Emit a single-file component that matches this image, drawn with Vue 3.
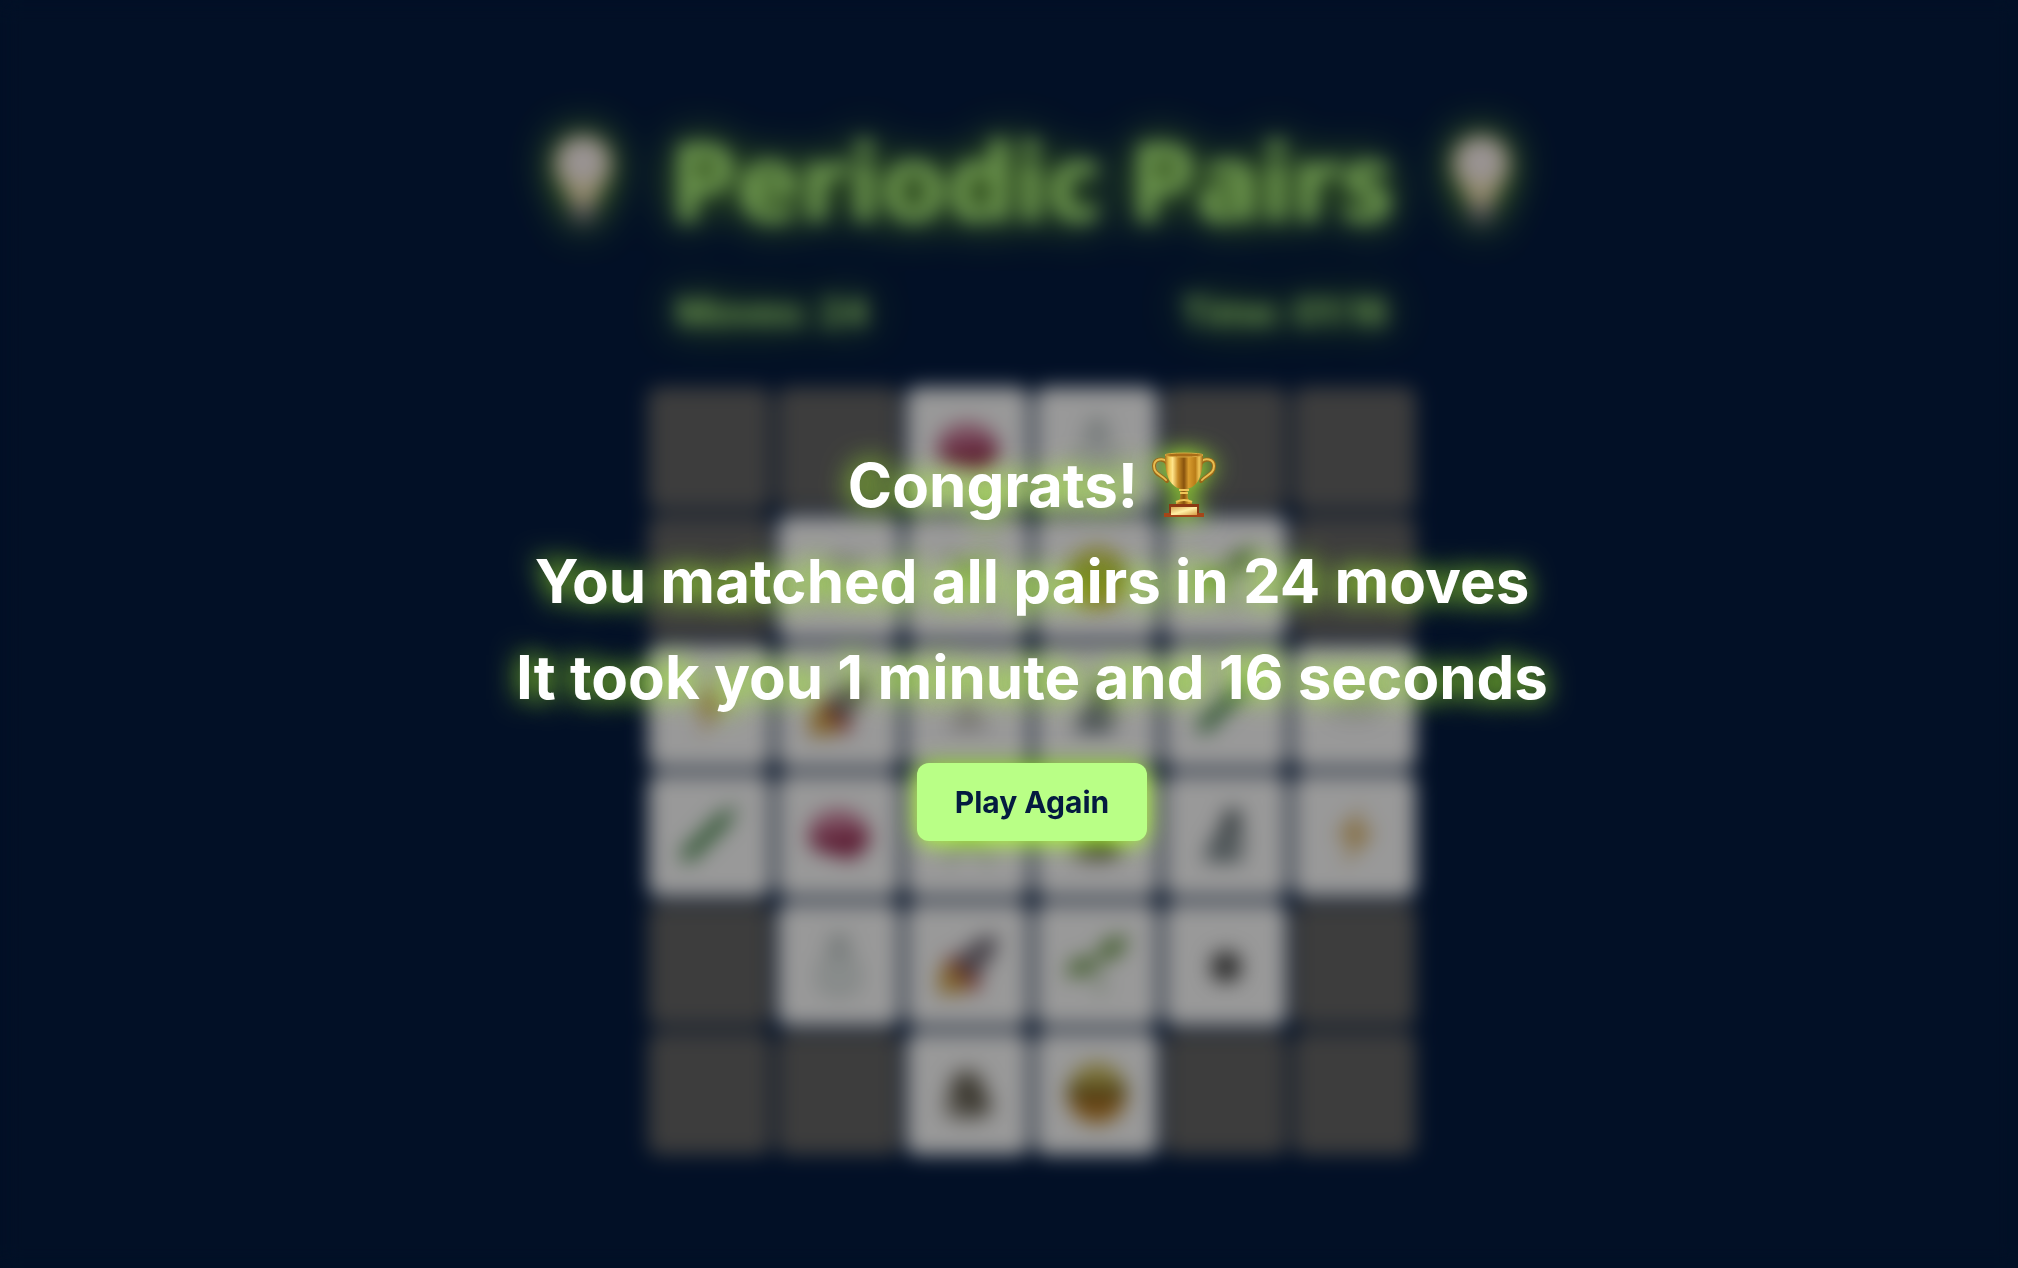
<script setup>
import { ref } from 'vue'

const moves = ref(24)
const time = ref('01:16')

const layout = [
  ['', '', 'brain', 'flask', '', ''],
  ['', 'dish', 'dna', 'nerd', 'seedling', ''],
  ['bolt', 'rocket', 'scale', 'microscope', 'tube', 'dish'],
  ['tube', 'brain', 'dna', 'fossil', 'microscope', 'bolt'],
  ['', 'flask', 'rocket', 'seedling', 'atom', ''],
  ['', '', 'fossil', 'nerd', '', ''],
]
const cards = ref(layout.flat().map((icon, id) => ({ id, icon })))
</script>

<template>
  <div class="page">
    <svg class="defs" aria-hidden="true">
      <defs>
        <symbol id="bulb" viewBox="0 0 106 106">
          <path d="M53 3C34 3 21 17 21 34c0 20 17 29 18 47h28c1-18 18-27 18-47C85 17 72 3 53 3z" fill="#f4e6b4" />
          <circle cx="53" cy="32" r="25" fill="#fff5f5" />
          <path d="M40 80h26v14q-13 16-26 0z" fill="#8d8a90" />
        </symbol>
        <symbol id="brain" viewBox="0 0 64 64">
          <path d="M1 33C1 15 15 6 32 6s31 12 31 27c0 12-8 13-12 16-2 8-9 9-13 4C23 50 1 49 1 33z" fill="#cc7c9a" />
          <path d="M2 34c15-8 22 0 36-6 9-4 18-2 25 5-1 11-7 13-12 16-2 8-9 9-13 4C23 50 5 48 2 34z" fill="#9b3358" />
        </symbol>
        <symbol id="flask" viewBox="0 0 64 64">
          <path d="M24 3h16l1 18c8 6 11 14 11 24 0 12-8 17-20 17s-20-5-20-17c0-10 3-18 11-24z" fill="#e5ebea" stroke="#c9d1cf" stroke-width="4" />
          <path d="M24 4h16v22H24z" fill="#c6cdcd" />
        </symbol>
        <symbol id="dish" viewBox="0 0 64 64">
          <ellipse cx="32" cy="34" rx="29" ry="15" fill="#e6e7e8" />
          <path d="M20 12q16-6 36 2v7q-18 6-36 0z" fill="#c7c9ca" />
        </symbol>
        <symbol id="scale" viewBox="0 0 64 64">
          <path d="m32 6 24 52H8z" fill="#e2e1df" />
          <path d="m32 28 14 26H18z" fill="#c4c2be" />
        </symbol>
        <symbol id="dna" viewBox="0 0 64 64">
          <path d="M50 4C52 28 14 34 14 60M14 4c0 24 38 32 38 56" fill="none" stroke="#c3d3b6" stroke-width="7" />
          <path d="M20 18h26l-14 16z" fill="#8aae62" />
        </symbol>
        <symbol id="nerd" viewBox="0 0 64 64">
          <circle cx="32" cy="32" r="30" fill="#c99136" />
          <path d="M3 30a29 29 0 0 1 58 0z" fill="#cdbd5b" />
          <path d="M3 23h58v12q-15 5-26-2h-6q-12 7-26 2z" fill="#7b6a26" />
          <path d="M11 36h42q-5 14-21 14T11 36z" fill="#a86a20" />
        </symbol>
        <symbol id="seedling" viewBox="0 0 64 64">
          <path d="M34 61C38 48 33 38 28 34" fill="none" stroke="#a3bb96" stroke-width="5" />
          <path d="M1 42C3 27 16 20 32 27 30 40 16 47 1 42z" fill="#6f9c4c" />
          <path d="M32 28C32 10 44 2 63 4 61 19 49 29 32 28z" fill="#6f9c4c" />
        </symbol>
        <symbol id="bolt" viewBox="0 0 64 64">
          <path d="M40 2 12 34h17l-8 28 31-37H35z" fill="#dcb263" />
        </symbol>
        <symbol id="rocket" viewBox="0 0 64 64">
          <path d="M2 61 5 31l18 3 12 13-8 13z" fill="#d4a344" />
          <path d="M9 27 20 21l26 24-8 17-11-18z" fill="#b04b4a" />
          <path d="M61 3C42 3 31 12 20 29l16 15C51 34 61 22 61 3z" fill="#6c6775" />
          <circle cx="43" cy="23" r="7" fill="#99878a" />
        </symbol>
        <symbol id="fossil" viewBox="0 0 64 64">
          <path d="M13 22Q18 5 34 7q14 2 16 20l9 20-14 11H15L7 47z" fill="#9a958b" />
          <path d="M18 20q14-12 26 6l8 18-14 8-16-10z" fill="#645f51" />
        </symbol>
        <symbol id="microscope" viewBox="0 0 64 64">
          <path d="m34 3 15 6-14 31-13-5z" fill="#566166" />
          <path d="M17 31h18v12h13v15H11V45h6z" fill="#78858a" />
          <path d="M42 19q7 15 1 32" fill="none" stroke="#7b868a" stroke-width="8" />
        </symbol>
        <symbol id="tube" viewBox="0 0 64 64">
          <path d="M55 6 9 50" stroke="#b5cbb7" stroke-width="12" stroke-linecap="round" />
          <path d="M46 15 10 51" stroke="#4a8c4e" stroke-width="14" stroke-linecap="round" />
        </symbol>
        <symbol id="atom" viewBox="0 0 64 64">
          <path d="M32 17q16 1 16 17T32 50 16 34t16-17z" fill="#707070" />
          <circle cx="32" cy="34" r="9" fill="#353535" />
        </symbol>
      </defs>
    </svg>

    <main class="game">
      <h1 class="title">
        <svg class="bulb"><use href="#bulb" /></svg>
        <span>Periodic Pairs</span>
        <svg class="bulb"><use href="#bulb" /></svg>
      </h1>
      <div class="status">
        <span>Moves: {{ moves }}</span>
        <span>Time: {{ time }}</span>
      </div>
      <div class="board">
        <div v-for="card in cards" :key="card.id" class="card" :class="{ empty: !card.icon }">
          <svg v-if="card.icon" class="icon"><use :href="'#' + card.icon" /></svg>
        </div>
      </div>
    </main>

    <section class="overlay" role="dialog" aria-label="Game complete">
      <div class="message">
        <p class="first">
          Congrats!
          <svg class="trophy" viewBox="0 0 64 66" role="img" aria-label="Trophy">
            <defs>
              <linearGradient id="cup" x1="0" x2="1">
                <stop offset="0" stop-color="#a96f18" />
                <stop offset=".1" stop-color="#f0c650" />
                <stop offset=".2" stop-color="#ffe58a" />
                <stop offset=".34" stop-color="#c78c26" />
                <stop offset=".5" stop-color="#87520d" />
                <stop offset=".62" stop-color="#d89c2e" />
                <stop offset=".8" stop-color="#b97c18" />
                <stop offset=".9" stop-color="#f0c658" />
                <stop offset="1" stop-color="#9a6314" />
              </linearGradient>
              <linearGradient id="plate" x1="0" y1="0" x2="1" y2="1">
                <stop offset="0" stop-color="#d9a550" />
                <stop offset=".5" stop-color="#fff0a5" />
                <stop offset="1" stop-color="#d59c45" />
              </linearGradient>
            </defs>
            <g fill="none" stroke-linecap="round">
              <path d="M15 11C11 5 2 7 2 14c0 9 8 9 13 15M49 11c4-6 13-4 13 3 0 9-8 9-13 15" stroke="#9b6818" stroke-width="4" />
              <path d="M15 10C11 5 2 7 2 14c0 8 8 9 12 14M49 10c4-5 13-3 13 4 0 8-8 9-12 14" stroke="#e8bd50" stroke-width="2" />
            </g>
            <path d="M13 3h38c0 17-3 31-16 34l1 10 4 4v3H24v-3l4-4 1-10C16 34 13 20 13 3z" fill="url(#cup)" />
            <ellipse cx="32" cy="3" rx="19" ry="2" fill="#a96d18" stroke="#d9a840" />
            <path d="M27 38h10M28 41h8M24 50q8-4 16 0" fill="none" stroke="#efc658" stroke-width="2" />
            <path d="M17 52h30v10H17z" fill="#8c3913" />
            <path d="M12 61h40v4H12z" fill="#a54618" />
            <path d="M19 55h26v8H19z" fill="url(#plate)" />
          </svg>
        </p>
        <p>You matched all pairs in {{ moves }} moves</p>
        <p>It took you 1 minute and 16 seconds</p>
      </div>
      <button type="button" class="again">Play Again</button>
    </section>
  </div>
</template>

<style>
body {
  margin: 0;
  background: #041b40;
}
</style>

<style scoped>
.page {
  position: relative;
  min-height: 100vh;
  box-sizing: border-box;
  padding-left: 46px;
  overflow: hidden;
  background: #041b40;
  font-family: Inter, "Liberation Sans", sans-serif;
}
.defs {
  position: absolute;
  width: 0;
  height: 0;
}
.game {
  display: flex;
  flex-direction: column;
  align-items: center;
  padding: 108px 0;
  color: #b9ff86;
  text-shadow: 0 0 40px #adff2f;
}
.title {
  display: flex;
  align-items: center;
  gap: 40px;
  margin: 0;
  font: 700 107px/144px "Noto Sans", sans-serif;
  white-space: nowrap;
}
.bulb {
  width: 94px;
  height: 94px;
  overflow: visible;
  filter: drop-shadow(0 0 20px #adff2f);
}
.status {
  display: flex;
  justify-content: space-between;
  width: 712px;
  margin: 36px 0 50px;
  font-size: 38px;
  font-weight: 600;
  line-height: 49px;
}
.board {
  display: grid;
  grid-template-columns: repeat(6, 123px);
  gap: 6px;
}
.card {
  display: flex;
  align-items: center;
  justify-content: center;
  height: 123px;
  border-radius: 12px;
  background: #fff;
}
.empty {
  background: #666;
}
.icon {
  width: 64px;
  height: 64px;
}
.overlay {
  position: absolute;
  inset: 0;
  display: flex;
  flex-direction: column;
  align-items: center;
  justify-content: center;
  gap: 38px;
  padding: 10px 0 0 46px;
  background: rgba(0, 0, 0, 0.4);
  backdrop-filter: blur(10px);
}
.message {
  color: #fff;
  font-size: 60px;
  font-weight: 700;
  line-height: 96px;
  text-align: center;
  text-shadow: 0 0 28px #adff2f;
}
.message p {
  margin: 0;
}
.first {
  display: flex;
  align-items: center;
  justify-content: center;
  gap: 14px;
}
.trophy {
  width: 64px;
  height: 66px;
  overflow: visible;
  filter: drop-shadow(0 0 12px #adff2f);
}
.again {
  padding: 20px 38px;
  border: 0;
  border-radius: 12px;
  background: #b9ff86;
  box-shadow: 0 2px 24px #adff2f;
  color: #041b40;
  font: 700 30px/38px Inter, "Liberation Sans", sans-serif;
  cursor: pointer;
}
</style>
